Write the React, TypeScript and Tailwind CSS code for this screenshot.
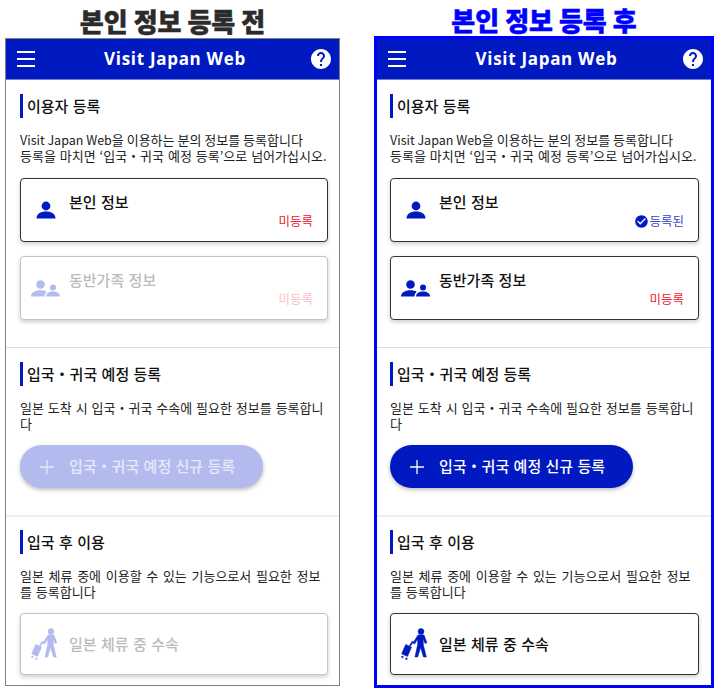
import clsx from "clsx";
import { MdCheckCircle, MdHelp } from "react-icons/md";

const KR = "font-['Noto_Sans_CJK_KR','Noto_Sans',sans-serif]";

function PersonIcon({ className }: { className?: string }) {
  return (
    <svg viewBox="0 0 20 18" className={className} fill="currentColor">
      <circle cx="10" cy="5" r="4.400" />
      <path d="M0.500 17.500c0-4.400 4-7 9.500-7s9.500 2.600 9.500 7z" />
    </svg>
  );
}

function FamilyIcon({ className }: { className?: string }) {
  return (
    <svg viewBox="0 0 30 17" className={className} fill="currentColor">
      <circle cx="9.500" cy="4.500" r="4.300" />
      <path d="M0 16.500c0-4 4-6.300 9.500-6.300 2.500 0 4.700.5 6.300 1.500-1.500 1.100-2.300 2.800-2.300 4.800z" />
      <circle cx="22" cy="7.500" r="3" />
      <path d="M15 16.500c0-3 2.900-5 7-5s7 2 7 5z" />
    </svg>
  );
}

function WalkerIcon({ className }: { className?: string }) {
  return (
    <svg viewBox="1 1 36 36" className={className} fill="currentColor" stroke="currentColor" strokeWidth="0.600">
      <circle cx="24" cy="6.500" r="2.900" />
      <path d="M21 10h6l2.800 7.800-1.700.7-2-5 .2 6.500 3 12h-2.800l-2.900-9.500-3 9.500h-2.600l2.700-12.500v-5.500l-3.200 5-1.500-1z" />
      <path d="M8.700 19.500l5.800 2.600-4 9.300-5.800-2.600z" />
      <path d="M12.500 20.300l3-4.300 1 .7-3 4.300zM5 31l1.300.6-.5 1.300-1.300-.6zM9 32.800l1.300.6-.5 1.300-1.300-.6z" />
    </svg>
  );
}

function SectionTitle({ children }: { children: string }) {
  return (
    <div className="flex h-6 items-center border-l-[3.500px] border-[#0019c0] pl-1 text-[15px] font-medium [word-spacing:1px] text-[#111]">
      {children}
    </div>
  );
}

function Desc({ children }: { children: React.ReactNode }) {
  return <p className="mt-[14px] text-[13px] leading-[15.500px] [word-spacing:1px] text-[#222]">{children}</p>;
}

type CardProps = {
  icon: React.ReactNode;
  label: string;
  status?: React.ReactNode;
  enabled: boolean;
  height: string;
};

function Card({ icon, label, status, enabled, height }: CardProps) {
  return (
    <div
      className={clsx(
        "relative rounded border bg-white shadow-[0_2px_4px_rgba(0,0,0,0.2)]",
        height,
        enabled ? "border-[#333]" : "border-[#c4c4c4]",
      )}
    >
      <div
        className={clsx(
          "absolute left-[10px] flex h-[30px] w-[30px] items-center justify-center",
          status ? "top-[16px]" : "top-[15px]",
          enabled ? "text-[#0019c0]" : "text-[#b3bbee]",
        )}
      >
        {icon}
      </div>
      <div
        className={clsx(
          "absolute left-[48px] text-[15px] font-medium [word-spacing:1px]",
          status ? "top-[12px]" : "top-[19px]",
          enabled ? "text-[#111]" : "text-[#bbb]",
        )}
      >
        {label}
      </div>
      {status && <div className="absolute right-[14px] bottom-[12px] flex items-center text-[12.500px] leading-4">{status}</div>}
    </div>
  );
}

function Phone({ after }: { after: boolean }) {
  const padding = after ? "pr-[12px] pl-[13px]" : "pr-[11px] pl-[14px]";

  return (
    <div className={clsx("bg-white", KR, after ? "h-[652px] w-[340px] border-[3px] border-[#0000ff]" : "h-[648px] w-[335px] border border-[#808080]")}>
      <header className="flex h-[41px] items-center justify-between border-b border-[#6f7bd0] bg-[#0019c0] pr-[6px] pl-[11px] text-white">
        <div className="flex w-[18px] flex-col gap-[5px]">
          <span className="h-0.5 bg-white" />
          <span className="h-0.5 bg-white" />
          <span className="h-0.5 bg-white" />
        </div>
        <h1 className="ml-1.5 font-['Open_Sans',sans-serif] text-[17px] font-bold tracking-[0.7px]">Visit Japan Web</h1>
        <MdHelp className="h-6 w-6" />
      </header>

      <section className={clsx("h-[268px] border-b border-[#ddd] pt-[14px]", padding)}>
        <SectionTitle>이용자 등록</SectionTitle>
        <Desc>
          <span className="text-[12.500px] [word-spacing:0]">Visit Japan Web</span>
          <span className="[word-spacing:0]">을 이용하는 분의 정보를 등록합니다</span>
          <br />
          등록을 마치면 ‘입국・귀국 예정 등록’으로 넘어가십시오.
        </Desc>
        <div className="mt-[15px] flex flex-col gap-[14px]">
          <Card
            enabled
            height="h-16"
            label="본인 정보"
            icon={<PersonIcon className="h-[18px] w-5" />}
            status={
              after ? (
                <>
                  <MdCheckCircle className="h-[15px] w-[15px] text-[#0019c0]" />
                  <span className="text-[#3a46c8]">등록된</span>
                </>
              ) : (
                <span className="text-[#f0202c]">미등록</span>
              )
            }
          />
          <Card
            enabled={after}
            height="h-16"
            label="동반가족 정보"
            icon={<FamilyIcon className="h-[17px] w-[30px]" />}
            status={<span className={after ? "text-[#f0202c]" : "text-[#f9c0c4]"}>미등록</span>}
          />
        </div>
      </section>

      <section className={clsx("h-[169px] border-b-2 border-[#eee] pt-[14px]", padding)}>
        <SectionTitle>입국・귀국 예정 등록</SectionTitle>
        <Desc>일본 도착 시 입국・귀국 수속에 필요한 정보를 등록합니다</Desc>
        <button
          className={clsx(
            "mt-[14px] flex h-[43px] w-[243px] items-center rounded-full pl-[20px] text-[15px] font-medium [word-spacing:1px] shadow-[0_2px_4px_rgba(0,0,0,0.25)]",
            after ? "bg-[#0019c0] text-white" : "bg-[#b3bbee] text-[#e6e9fa]",
          )}
        >
          <svg viewBox="0 0 14 14" className="mr-[15px] h-[14px] w-[14px]" stroke="currentColor" strokeWidth="1.300">
            <path d="M7 0v14M0 7h14" />
          </svg>
          입국・귀국 예정 신규 등록
        </button>
      </section>

      <section className={clsx("pt-[13px]", padding)}>
        <SectionTitle>입국 후 이용</SectionTitle>
        <Desc>
          <span className="[word-spacing:1.750px]">일본 체류 중에 이용할 수 있는 기능으로서 필요한 정보</span>
          <br />를 등록합니다
        </Desc>
        <div className="mt-[14px]">
          <Card
            enabled={after}
            height="h-[62px]"
            label="일본 체류 중 수속"
            icon={<WalkerIcon className="h-9 w-9 shrink-0" />}
          />
        </div>
      </section>
    </div>
  );
}

function Column({ title, after }: { title: string; after: boolean }) {
  return (
    <div className="flex flex-col">
      <div
        className={clsx(
          "flex items-center justify-center pt-[3px] text-[26px] leading-none font-black [-webkit-text-stroke:0.5px_currentColor]",
          KR,
          after ? "h-9 text-[#0000ff]" : "h-[38px] text-[#2b2b2b]",
        )}
      >
        {title}
      </div>
      <Phone after={after} />
    </div>
  );
}

export default function App() {
  return (
    <div className="flex h-[690px] w-[718px] items-start gap-[34px] bg-white pl-[5px]">
      <Column title="본인 정보 등록 전" after={false} />
      <Column title="본인 정보 등록 후" after />
    </div>
  );
}
